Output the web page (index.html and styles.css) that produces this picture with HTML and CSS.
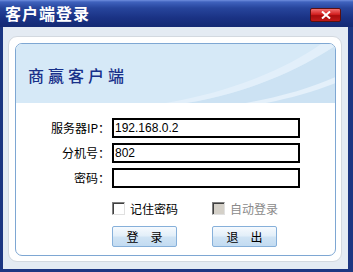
FILE: index.html
```html
<!DOCTYPE html>
<html lang="zh-CN">
<head>
  <meta charset="UTF-8" />
  <title>客户端登录</title>
  <link rel="stylesheet" href="styles.css">
</head>
<body>
  <div class="window">
    <div class="titlebar">
      <span class="title">客户端登录</span>
      <button class="close" title="关闭">
        <svg width="10" height="8" viewBox="0 0 10 8"><path d="M1 0.5 L9 7.5 M9 0.5 L1 7.5" stroke="#fff" stroke-width="2"/></svg>
      </button>
    </div>

    <div class="client">
      <div class="panel">
        <div class="inner">
          <div class="banner">
            <svg class="swoosh" width="322" height="59" viewBox="0 0 322 59">
              <path d="M170 59 C230 50 285 25 322 0 L322 59 Z" fill="#cce2f3"/>
              <path d="M150 59 C215 48 270 25 305 0 L322 0 C285 25 230 50 170 59 Z" fill="#e2effa"/>
              <path d="M230 59 C270 52 300 42 322 32 L322 38 C300 47 275 54 250 59 Z" fill="#e4f0fa"/>
            </svg>
            <span class="brand">商赢客户端</span>
          </div>

          <div class="form">
            <label class="label" for="ip">服务器IP<span class="colon">：</span></label>
            <input class="field" id="ip" value="192.168.0.2">
            <label class="label" for="ext">分机号<span class="colon">：</span></label>
            <input class="field" id="ext" value="802">
            <label class="label" for="pwd">密码<span class="colon">：</span></label>
            <input class="field" id="pwd" type="password">
          </div>

          <div class="row checks">
            <div class="check"><span class="box"></span>记住密码</div>
            <div class="check disabled"><span class="box"></span>自动登录</div>
          </div>

          <div class="row actions">
            <div class="slot"><button class="btn">登　录</button></div>
            <div class="slot"><button class="btn">退　出</button></div>
          </div>
        </div>
      </div>
    </div>
  </div>
</body>
</html>
```

FILE: styles.css
```css
body {
  margin: 0;
  width: 353px;
  height: 272px;
  overflow: hidden;
  font-family: "Noto Sans CJK SC", "Liberation Sans", sans-serif;
  font-size: 12px;
}
.window {
  display: flex;
  flex-direction: column;
  height: 272px;
  background: #1c3682;
}
.titlebar {
  height: 27px;
  display: flex;
  align-items: center;
  justify-content: space-between;
  padding: 0 12px 0 5px;
  background: linear-gradient(#6f8ede 0, #3f62bd 2px, #27459c 8px, #1a3284 18px, #142a74 27px);
}
.title {
  color: #fff;
  font-size: 16px;
  font-weight: bold;
  letter-spacing: 1px;
  line-height: 27px;
}
.close {
  width: 31px;
  height: 14px;
  margin-top: 2px;
  padding: 0;
  border: 1px solid #5b1010;
  border-radius: 2px;
  background: linear-gradient(#f07070, #d42020 45%, #a80c0c 55%, #c01818);
  display: flex;
  align-items: center;
  justify-content: center;
}
.client {
  flex: 1;
  margin: 0 5px 3px 3px;
  padding: 9px 6px 7px 5px;
  background: #e4ebf3;
  display: flex;
}
.panel {
  flex: 1;
  background: #fff;
  border: 1px solid #d3d9e0;
  border-radius: 9px;
  padding: 6px 5px 5px 6px;
  display: flex;
}
.inner {
  flex: 1;
  border: 1px solid #7ea7d3;
  border-radius: 7px;
  overflow: hidden;
  display: flex;
  flex-direction: column;
}
.banner {
  position: relative;
  height: 59px;
  background: #d6e9f7;
  display: flex;
  align-items: center;
  padding-left: 12px;
}
.swoosh {
  position: absolute;
  left: 0;
  top: 0;
}
.brand {
  position: relative;
  color: #18308a;
  font-size: 16px;
  font-weight: 500;
  letter-spacing: 4px;
  margin-top: 2px;
}
.form {
  display: grid;
  grid-template-columns: 92px 188px;
  column-gap: 4px;
  row-gap: 5px;
  padding-top: 15px;
}
.label {
  text-align: right;
  line-height: 20px;
  color: #000;
}
.colon {
  display: inline-block;
  width: 10px;
  text-align: left;
}
.field {
  box-sizing: border-box;
  height: 20px;
  margin: 0;
  padding: 0 1px;
  border: 2px solid #000;
  font-family: "Liberation Sans", sans-serif;
  font-size: 12px;
  color: #000;
  outline: none;
}
.row {
  display: flex;
  padding-left: 96px;
}
.checks {
  margin-top: 13px;
  height: 15px;
  align-items: center;
}
.check {
  width: 100px;
  display: flex;
  align-items: center;
  gap: 5px;
  color: #000;
}
.check.disabled {
  color: #8a8a8a;
}
.box {
  box-sizing: border-box;
  width: 13px;
  height: 13px;
  background: #fff;
  border: 1px solid;
  border-color: #808080 #e0e0e0 #e0e0e0 #808080;
  box-shadow: inset 1px 1px 0 #404040;
}
.check.disabled .box {
  background: #d4d0c8;
}
.actions {
  margin-top: 10px;
}
.slot {
  width: 100px;
}
.btn {
  width: 65px;
  height: 21px;
  padding: 0;
  border: 1px solid #86b0da;
  border-radius: 2px;
  background: linear-gradient(#f6fafe, #e3eff9 45%, #cfe3f4 55%, #c2dbf1);
  font-family: "Noto Sans CJK SC", sans-serif;
  font-size: 12px;
  color: #000;
  cursor: pointer;
}
```
